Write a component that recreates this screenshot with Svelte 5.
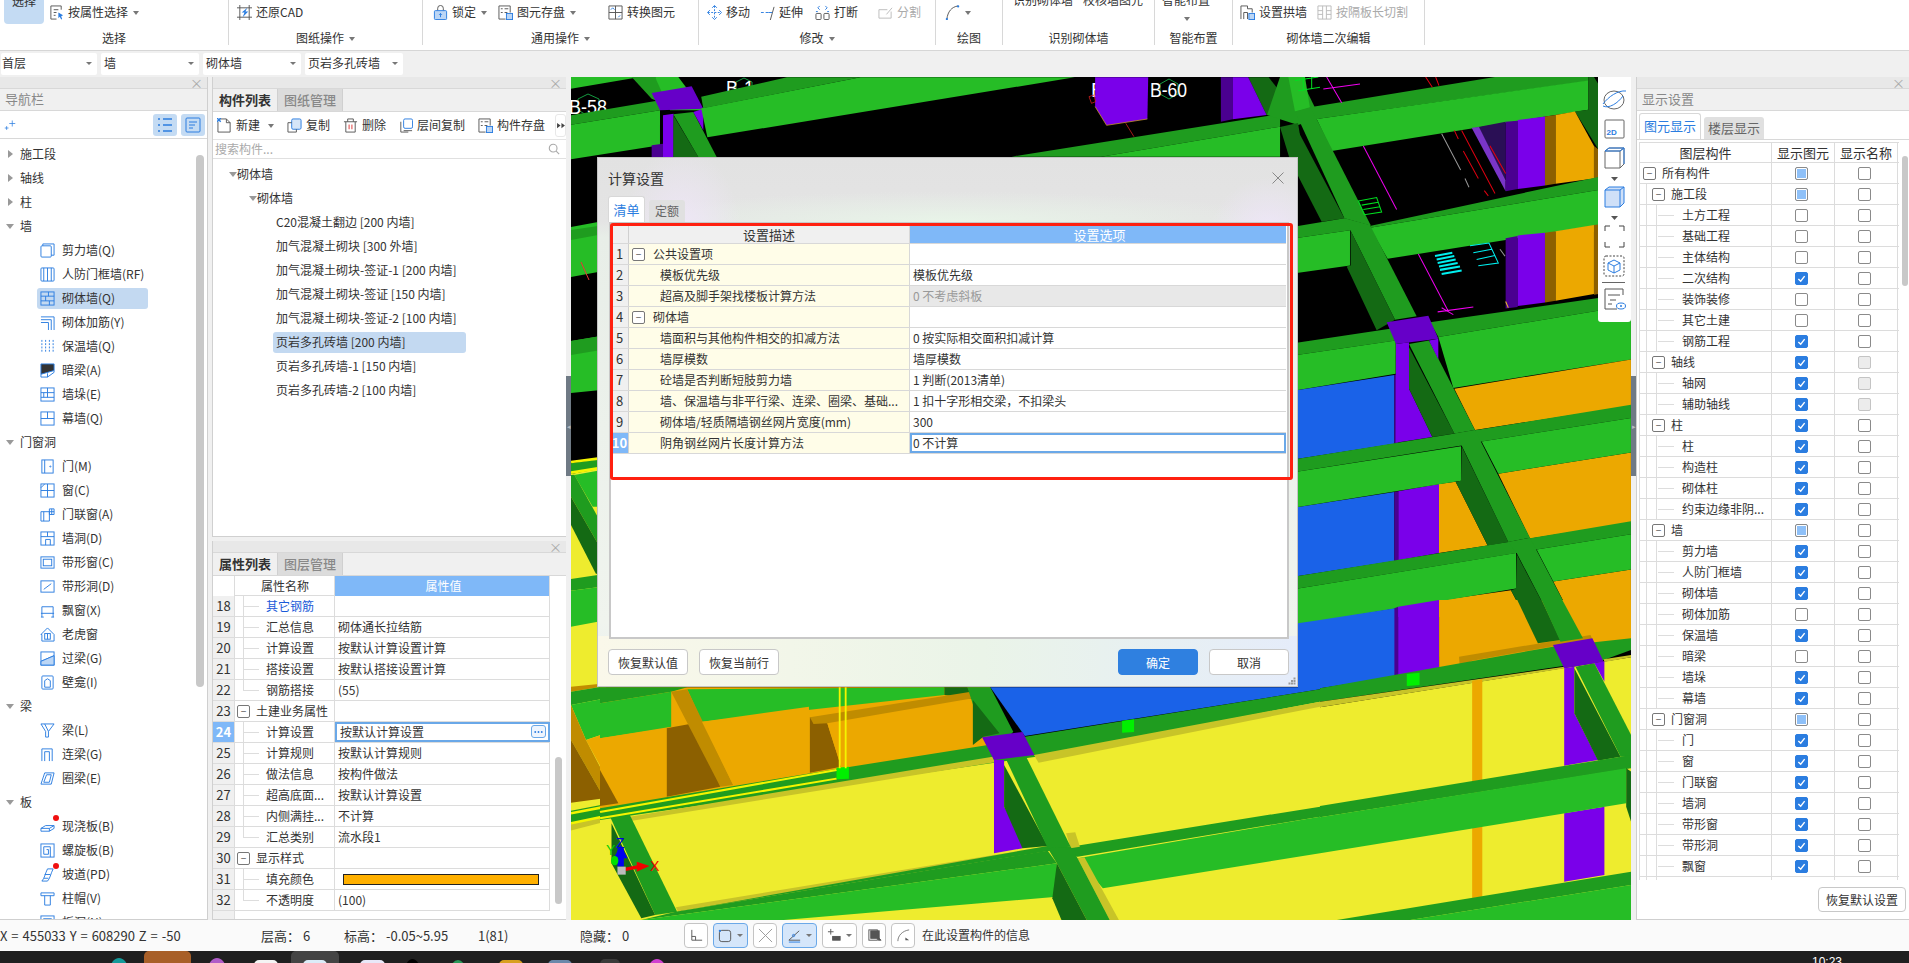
<script>
  const G='#26bd26',D='#1f9c1f',K='#146a14',P='#7a00ea',Q='#6600c8',V='#4a0090',B='#1a62e8',O='#eca800',N='#8c6000',R='#c08c00',Y='#eeec2e',L='#c8c428',S='#00f000';

  const leftStrip=[
    [Y,'15,222 120,200 120,1560 15,1560'],[D,'15,190 95,178 95,208 15,222'],[G,'25,225 95,212 95,320 80,320'],
    [D,'15,225 25,224 95,350 95,430 15,290'],[K,'15,290 95,430 95,520 90,522 15,375'],[D,'15,537 95,525 95,562 15,572'],
    [G,'15,572 95,562 95,665 15,680'],[R,'15,860 120,850 120,858 15,875'],[D,'15,875 120,858 120,895 15,915'],
    [G,'15,915 120,895 120,1000 60,1020'],[O,'60,1020 120,1000 120,1130'],[R,'15,915 60,1020 120,1135 120,1195 115,1195 15,1020'],
    [N,'15,1020 115,1195 15,1208'],[D,'15,1232 120,1212 120,1250 15,1272'],[L,'15,1272 120,1250 120,1265 15,1292']
  ];
  const topLeft=[
    [G,'33,0 240,0 33,35'],[D,'215,0 285,0 355,100 275,65'],[G,'285,0 355,0 430,100 330,100'],
    [D,'33,115 300,70 300,100 33,143'],[G,'33,143 300,100 300,205 33,247'],[V,'275,205 309,200 309,270 275,270'],
    [P,'309,115 341,110 341,270 309,270'],[K,'340,115 415,240 340,240'],[D,'340,112 400,105 470,240 415,240'],
    [P,'400,105 430,95 430,160'],[Q,'275,48 395,28 430,95 300,100']
  ];
  const topBand=[
    [G,'150,325 540,232 1065,232 165,412'],[D,'150,290 360,232 540,232 155,325'],
    [D,'910,470 1568,342 1568,380 1130,470'],[G,'1130,470 1568,380 1568,470'],
    [K,'1490,232 1540,232 1568,275 1568,340 1535,345'],[V,'1423,232 1452,232 1452,358 1423,365'],[P,'1452,232 1490,232 1535,345 1452,358'],
    [P,'1115,232 1245,232 1243,357 1143,376 1115,320']
  ];
  const right=[
    [G,'-20,0 30,0 45,90 0,100'],[D,'45,88 600,0 880,0 880,12 65,122 20,122'],[G,'65,122 880,10 880,95 110,215'],
    [K,'880,0 897,0 910,20 910,210 840,100 880,95'],[D,'0,100 45,88 65,122 228,432 148,410'],[K,'0,140 148,410 80,420 0,270'],
    ['#2a0f55','550,145 632,130 632,300'],['#7a35c8','530,147 552,145 632,300 632,332'],
    [V,'632,130 668,127 668,325 632,332'],[P,'668,125 750,115 750,315 668,325'],[N,'750,115 782,110 782,310 750,315'],[O,'782,110 840,100 897,200 897,295 782,310'],[N,'897,200 910,210 910,292 897,295'],
    [D,'228,432 910,290 910,328 225,438'],[G,'225,438 910,328 910,430 278,528'],[D,'0,434 148,410 225,432 165,445 0,468'],[G,'0,468 165,445 165,547 0,570'],
    [D,'148,410 225,430 365,695 300,705'],[K,'167,447 300,705 245,735 155,550 167,547'],
    [V,'632,468 668,462 668,668 632,672'],[P,'668,460 750,452 750,655 668,665'],[N,'750,452 782,448 782,650 750,655'],[O,'782,448 897,430 897,630 782,650'],[N,'897,430 910,428 910,630 897,632'],
    [D,'0,772 290,730 303,765 0,808'],[G,'0,808 302,765 302,862 0,910'],[D,'405,712 1008,628 1008,663 430,755'],[G,'430,755 1008,663 1008,820 475,903'],
    [B,'0,910 298,865 298,1065 0,1110'],[V,'298,865 310,860 310,1062 298,1065'],[P,'303,775 342,770 342,905 412,1045 302,1062'],
    [O,'478,905 1008,820 1008,955 540,1025'],[K,'342,785 478,1035 412,1045 342,905'],[D,'342,775 402,765 540,1025 478,1035'],[P,'402,765 430,760 430,820'],[Q,'275,712 400,693 430,760 303,775'],
    [B,'0,1250 298,1205 298,1405 0,1450'],[V,'298,1205 310,1203 310,1403 298,1405'],[P,'310,1203 432,1182 432,1382 310,1403'],[O,'432,1182 482,1175 578,1360 432,1382'],[O,'610,1152 1008,1090 1008,1295 705,1340'],
    [D,'0,1110 480,1035 1008,952 1008,990 560,1058 500,1070 0,1147'],[G,'0,1147 498,1072 498,1172 0,1250'],[G,'560,1058 1008,990 1008,1090 610,1152'],
    [K,'500,1072 640,1350 578,1360 482,1175 498,1172'],[D,'480,1035 540,1025 705,1338 640,1350 500,1070'],
    [B,'0,1592 298,1545 298,1568 0,1568'],[V,'298,1545 310,1543 310,1568 298,1568'],[P,'310,1540 432,1520 432,1568 310,1568'],[O,'432,1520 648,1490 690,1568 432,1568'],[O,'775,1465 1008,1430 1008,1568 830,1568'],
    [D,'0,1450 640,1350 1008,1290 1008,1328 725,1372 665,1382 0,1487'],[G,'0,1487 663,1382 663,1485 0,1592'],[G,'725,1372 1008,1328 1008,1430 775,1465'],
    [K,'665,1385 765,1568 690,1568 648,1490 663,1485'],[D,'640,1350 705,1338 830,1568 765,1568 665,1382']
  ];
  const bottom=[
    [O,'0,262 850,262 850,480 0,660'],[B,'850,262 1568,262 1568,268 925,408'],
    [G,'1520,0 1568,0 1568,60 1520,70'],[B,'1520,70 1568,60 1568,265 1520,275'],
    [Y,'0,650 1568,300 1568,960 0,960'],
    [D,'0,262 190,262 155,275 0,310'],[G,'0,310 155,275 155,380 0,415'],[G,'190,268 750,262 750,285 222,365'],[K,'750,262 800,262 815,297 750,285'],
    [N,'145,385 222,365 262,560 145,590'],[R,'155,275 190,268 290,555 262,560'],[O,'222,365 455,320 458,520 290,555'],
    [N,'457,352 495,370 525,500 457,518'],[O,'495,370 812,297 812,438 525,500'],[R,'457,352 808,275 812,295 495,370 465,372'],
    [O,'0,415 145,385 145,590 40,610 0,510'],[N,'0,510 40,610 0,618'],
    [D,'800,262 850,262 900,395 890,410 835,410'],[K,'812,300 870,400 835,410 812,435'],
    [D,'0,625 515,507 845,435 925,410 1568,268 1568,305 950,470 0,660'],[L,'65,650 855,470 860,487 70,662'],[L,'945,465 1568,305 1568,320 955,488'],
    [Y,'0,668 22,660 90,960 0,960'],
    [D,'22,650 65,645 168,935 120,945'],[K,'25,670 120,945 90,955 25,790'],
    [L,'165,922 975,738 980,752 170,935'],[D,'120,945 165,935 980,752 1040,770 1568,650 1568,620 1025,740 975,738 168,935'],[D,'90,960 165,935 975,752 995,790'],
    [G,'90,960 995,790 995,890 400,960'],[G,'1040,775 1568,650 1568,760 1095,865'],
    [L,'1015,700 1035,697 1045,740 1025,745'],[L,'1040,775 1055,772 1130,960 1110,960'],[D,'975,745 1025,740 1040,775 1110,960 1060,960 995,790'],[K,'995,790 985,895 1005,960 1060,960'],
    [P,'858,480 880,480 880,620 920,715 920,745 858,760'],[K,'880,495 975,738 920,745 880,620'],[D,'885,480 928,470 1025,740 975,745'],[Q,'832,412 920,396 946,465 858,480'],
    [S,'515,503 542,500 542,536 515,538'],[S,'1137,362 1163,358 1163,396 1137,398']
  ];
  const lower=[
    [B,'0,60 200,25 200,230 0,265'],[V,'198,25 208,20 208,230 198,232'],[P,'208,20 317,0 317,210 208,232'],[O,'317,0 828,0 828,120 317,210'],
    [Y,'0,322 828,172 828,960 0,960'],[R,'370,170 720,105 725,118 405,182 372,200'],
    [K,'525,0 590,0 640,120 580,130'],[D,'590,0 645,0 700,115 640,125'],
    [D,'0,265 620,140 828,115 828,150 755,180 0,305'],[L,'0,305 650,200 652,205 0,322'],[L,'755,178 828,165 828,172 757,186'],
    [O,'405,242 432,238 432,890 405,895'],[P,'650,205 677,200 677,340 740,480 650,497'],[P,'730,190 757,184 757,245'],[K,'677,205 800,470 740,482 677,340'],[D,'680,200 730,190 828,405 828,470 800,470'],
    [P,'650,640 757,620 757,825 650,845'],[D,'0,618 800,470 828,465 828,505 0,652'],[G,'0,652 815,505 815,610 0,760'],[K,'815,505 828,515 828,665 815,620'],
    [Q,'620,135 725,115 755,185 650,205'],[S,'231,222 265,218 265,255 231,258'],
    [D,'45,960 828,815 828,855 240,960'],[G,'240,960 828,855 828,960']
  ];

  const i={
    shear:'<rect x="1" y="3" width="11" height="12" rx="1"/><path d="M3 3V1h12v12h-3"/>',
    rf:'<rect x="1" y="1" width="14" height="14" rx="1"/><path d="M4 1v14M8 1v14M12 1v14"/>',
    brick:'<rect x="1" y="1" width="14" height="14"/><path d="M1 5.500h14M1 10.500h14M9 1v4.500M6 5.500v5M10 10.500v4.500"/>',
    rebar:'<path d="M1 2h14v14M1 5h11v11M1 8h8v8"/>',
    insul:'<path d="M2 1v14M14 1v14M6 1v14M10 1v14" stroke-dasharray="2 1.500"/>',
    dark:'<path d="M1 1h14v7L1 12z" fill="currentColor"/><path d="M1 12v3h7l7-5V8M8 11v4"/>',
    pier:'<rect x="1" y="1" width="14" height="14"/><path d="M1 6h14M1 11h14M8 1v5M8 6v5M4 6v5"/>',
    curtain:'<rect x="1" y="1" width="14" height="14"/><path d="M1 8h14M8 1v7"/>',
    door:'<rect x="2" y="1" width="12" height="14"/><path d="M5 1v14"/><circle cx="11" cy="8" r=".6"/>',
    win:'<rect x="1" y="1" width="14" height="14"/><path d="M1 8h14M8 1v14M1 5l4-4"/>',
    dw:'<path d="M1 5h9v10H1zM4 5v10M10 2h5v6h-5zM12.500 2v6M10 5h5"/>',
    hole:'<rect x="1" y="1" width="14" height="14"/><path d="M1 6h14M6 15V9h5v6M8 1v5"/>',
    strip:'<rect x="1" y="2" width="14" height="12"/><rect x="3.500" y="4.500" width="9" height="7"/>',
    striph:'<rect x="1" y="2" width="14" height="12"/><path d="M4 11l8-6"/>',
    bay:'<path d="M2 15V4h12v11M1 11h14M1 15h3M12 15h3"/>',
    dormer:'<path d="M1 8l7-7 7 7v7H2V8z"/><rect x="5" y="7" width="6" height="6"/><path d="M8 7v6"/>',
    lintel:'<rect x="1" y="1" width="14" height="14"/><path d="M1 11l14-6" /><path d="M1 11l14-6V15H1z" fill="#bcd6f5"/>',
    niche:'<rect x="2" y="1" width="12" height="14" rx="1"/><path d="M5 13V6l3-2 3 2v7z"/>',
    beam:'<path d="M1 1h14L9 9v6H6V9zM5 1l4 8"/>',
    coupling:'<path d="M2 15V2h11v13M5 15V5h5v10"/>',
    ring:'<path d="M5 2h10l-3 12H1zM7 4h5l-2 8H4z"/>',
    slab:'<path d="M1 10l5-3h9v3l-5 3H1zM1 10h9v3M10 10l5-3"/>',
    spiral:'<rect x="1" y="1" width="14" height="14"/><path d="M11 15V4H4v8h5V7H7"/>',
    ramp:'<path d="M2 15c3-3 3-7 6-13h6c-3 6-3 10-6 13zM5 8h6M4 12h5"/>',
    cap:'<path d="M1 2h14v3H1zM5 5v10h6V5"/>',
    slabh:'<rect x="1" y="1" width="14" height="14"/><rect x="4" y="4" width="8" height="8"/>',
    propsel:'<path d="M2 1h11v4M2 1v14h6M5 5h5M5 8h3M5 11h2" stroke="#555"/><path d="M10 8l5 3-2 1 1 3-1 .5-1.500-3-1.500 1.500z" fill="#2b7de0" stroke="none"/>',
    restore:'<path d="M3 0v16M0 3h16M13 0v16M0 13h16" stroke="#555"/><path d="M11 3L5 8h3l-2 5 6-6H9z" fill="#2b7de0" stroke="none"/>',
    lock:'<path d="M5 6V3.500a3 3 0 016 0V6" stroke="#555"/><rect x="1.500" y="6" width="13" height="9.500" rx="1" fill="#bcd6f5" stroke="#2b7de0"/><path d="M8 13V9M6.500 10.500L8 9l1.500 1.500" stroke="#2b7de0"/>',
    save:'<path d="M13 8V1H1v14h7M3 4h2M7 4h4M3 8h2M7 8h3" stroke="#555"/><rect x="9" y="9" width="6.500" height="6.500" fill="#bcd6f5" stroke="#2b7de0"/>',
    conv:'<path d="M1 1h14v14H1zM8 1v14M1 8h14" stroke="#555"/><path d="M3 5l2-2 2 2M11 13l2-2" stroke="#2b7de0"/>',
    move:'<path d="M8 1v14M1 8h14" stroke="#2b7de0" stroke-dasharray="2 1.500"/><path d="M5.500 3L8 .5 10.500 3M5.500 13L8 15.500 10.500 13M3 5.500L.5 8 3 10.500M13 5.500L15.500 8 13 10.500" stroke="#2b7de0"/>',
    extend:'<path d="M1 8h3M6 8h3" stroke="#2b7de0"/><path d="M15 2l-4 14" stroke="#555"/><path d="M9 8h4" stroke="#2b7de0"/>',
    brk:'<rect x="1" y="9" width="5.500" height="6.500" rx="1" stroke="#555"/><rect x="9.500" y="9" width="5.500" height="6.500" rx="1" stroke="#555"/><path d="M3 3l2-2M3 3l2 2M13 3l-2-2M13 3l-2 2M1 7h2M13 7h2" stroke="#2b7de0"/>',
    split:'<path d="M14 7v7H1V5h9M9 10l6-7" stroke="#bbb"/>',
    arc:'<path d="M2 15C3 7 7 2 14 1" stroke="#555"/><circle cx="14" cy="1.500" r="1.200" fill="#2b7de0" stroke="none"/><circle cx="2" cy="15" r="1.200" fill="#2b7de0" stroke="none"/>',
    arch:'<path d="M1 15V1h7v3h5v4M4 15V8h4v7" stroke="#555"/><rect x="9.500" y="9" width="6" height="6.500" fill="#bcd6f5" stroke="#2b7de0"/>',
    cut:'<path d="M1 1h14v14H1zM6 1v14M10 1v14M1 6h5M10 6h5M1 10h5M10 10h5" stroke="#bbb"/>',
    newf:'<path d="M3 1h7l4 4v10H1V4" stroke="#555"/><path d="M10 1v4h4" stroke="#555"/><path d="M0 0l4 4M4 0L0 4" stroke="#2b7de0" stroke-width="1.500"/>',
    copy:'<rect x="5" y="1" width="10" height="11" rx="1.500" fill="#d5e5f8" stroke="#2b7de0"/><path d="M5 5H1v10h9v-3" stroke="#555"/>',
    del:'<path d="M1 4h14M5 4V1h6v3M3 4v11h10V4" stroke="#555"/><path d="M6.500 7v5M9.500 7v5" stroke="#d33"/>',
    fcopy:'<rect x="6" y="1" width="9.500" height="10" rx="1.500" stroke="#2b7de0"/><path d="M6 13.500h9M3 4v11M3 15h8" stroke="#555"/>',
    list:'<path d="M1 2h2M1 8h2M1 14h2M6 2h9M6 8h9M6 14h9" stroke-width="1.500"/>',
    detail:'<rect x="1" y="1" width="14" height="14" rx="1"/><path d="M4 5h8M4 8h6M4 11h4"/>',
    add:'<path d="M1 12h5M3.500 9.500v5M11 2v8M7 6h8" />'
  };

  const groups=[
    {c:'g1',label:'选择',items:[{tile:1,t:'选择'},{ic:'propsel',t:'按属性选择',car:1,ml:5}]},
    {c:'g2',label:'图纸操作',lc:1,pl:8,items:[{ic:'restore',t:'还原CAD'}]},
    {c:'g3',label:'通用操作',lc:1,pl:10,items:[{ic:'lock',t:'锁定',car:1},{ic:'save',t:'图元存盘',car:1,ml:11},{ic:'conv',t:'转换图元',ml:32}]},
    {c:'g4',label:'修改',lc:1,pl:8,items:[{ic:'move',t:'移动'},{ic:'extend',t:'延伸',ml:10},{ic:'brk',t:'打断',ml:12},{ic:'split',t:'分割',ml:20,off:1}]},
    {c:'g5',label:'绘图',pl:9,items:[{ic:'arc',t:'',car:1}]},
    {c:'g6',label:'识别砌体墙',pl:10,items:[{clip:1,t:'识别砌体墙'},{clip:1,t:'校核墙图元',ml:10}]},
    {c:'g7',label:'智能布置',pl:7,items:[{clip:1,t:'智能布置',under:1}]},
    {c:'g8',label:'砌体墙二次编辑',pl:7,items:[{ic:'arch',t:'设置拱墙'},{ic:'cut',t:'按隔板长切割',ml:10,off:1}]}
  ];

  const nav=[
    ['c','施工段'],['c','轴线'],['c','柱'],['o','墙'],
    ['i','剪力墙(Q)','shear'],['i','人防门框墙(RF)','rf'],['i','砌体墙(Q)','brick',1],['i','砌体加筋(Y)','rebar'],['i','保温墙(Q)','insul'],['i','暗梁(A)','dark'],['i','墙垛(E)','pier'],['i','幕墙(Q)','curtain'],
    ['o','门窗洞'],['i','门(M)','door'],['i','窗(C)','win'],['i','门联窗(A)','dw'],['i','墙洞(D)','hole'],['i','带形窗(C)','strip'],['i','带形洞(D)','striph'],['i','飘窗(X)','bay'],['i','老虎窗','dormer'],['i','过梁(G)','lintel'],['i','壁龛(I)','niche'],
    ['o','梁'],['i','梁(L)','beam'],['i','连梁(G)','coupling'],['i','圈梁(E)','ring'],
    ['o','板'],['i','现浇板(B)','slab',0,1],['i','螺旋板(B)','spiral'],['i','坡道(PD)','ramp',0,1],['i','柱帽(V)','cap'],['i','板洞(N)','slabh']
  ];
  const tools=[['newf','新建',1,0],['copy','复制',0,13],['del','删除',0,13],['fcopy','层间复制',0,12],['save','构件存盘',0,13]];
  const tree=[['砌体墙',0],['砌体墙',1],['C20混凝土翻边 [200 内墙]',2],['加气混凝土砌块 [300 外墙]',2],['加气混凝土砌块-签证-1 [200 内墙]',2],['加气混凝土砌块-签证 [150 内墙]',2],['加气混凝土砌块-签证-2 [100 内墙]',2],['页岩多孔砖墙 [200 内墙]',2,1],['页岩多孔砖墙-1 [150 内墙]',2],['页岩多孔砖墙-2 [100 内墙]',2]];
  const attrs=[
    [18,'其它钢筋','','leaf link'],[19,'汇总信息','砌体通长拉结筋','leaf'],[20,'计算设置','按默认计算设置计算','leaf'],[21,'搭接设置','按默认搭接设置计算','leaf'],[22,'钢筋搭接','(55)','end'],
    [23,'土建业务属性','','grp'],[24,'计算设置','按默认计算设置','leaf sel'],[25,'计算规则','按默认计算规则','leaf'],[26,'做法信息','按构件做法','leaf'],[27,'超高底面...','按默认计算设置','leaf'],[28,'内侧满挂...','不计算','leaf'],[29,'汇总类别','流水段1','end'],
    [30,'显示样式','','grp'],[31,'填充颜色','#bar','leaf'],[32,'不透明度','(100)','end']
  ];
  const settings=[
    [1,'公共设置项','','grp'],[2,'模板优先级','模板优先级','leaf'],[3,'超高及脚手架找楼板计算方法','0 不考虑斜板','end off'],[4,'砌体墙','','grp'],
    [5,'墙面积与其他构件相交的扣减方法','0 按实际相交面积扣减计算','leaf'],[6,'墙厚模数','墙厚模数','leaf'],[7,'砼墙是否判断短肢剪力墙','1 判断(2013清单)','leaf'],
    [8,'墙、保温墙与非平行梁、连梁、圈梁、基础...','1 扣十字形相交梁，不扣梁头','leaf'],[9,'砌体墙/轻质隔墙钢丝网片宽度(mm)','300','leaf'],[10,'阴角钢丝网片长度计算方法','0 不计算','end sel']
  ];
  const layers=[
    [0,'所有构件','p',''],[1,'施工段','p',''],[2,'土方工程','',''],[2,'基础工程','',''],[2,'主体结构','',''],[2,'二次结构','c',''],[2,'装饰装修','',''],[2,'其它土建','',''],[2,'钢筋工程','c',''],
    [1,'轴线','c','g'],[2,'轴网','c','g'],[2,'辅助轴线','c','g'],
    [1,'柱','c',''],[2,'柱','c',''],[2,'构造柱','c',''],[2,'砌体柱','c',''],[2,'约束边缘非阴...','c',''],
    [1,'墙','p',''],[2,'剪力墙','c',''],[2,'人防门框墙','c',''],[2,'砌体墙','c',''],[2,'砌体加筋','',''],[2,'保温墙','c',''],[2,'暗梁','',''],[2,'墙垛','c',''],[2,'幕墙','c',''],
    [1,'门窗洞','p',''],[2,'门','c',''],[2,'窗','c',''],[2,'门联窗','c',''],[2,'墙洞','c',''],[2,'带形窗','c',''],[2,'带形洞','c',''],[2,'飘窗','c',''],[2,'老虎窗','c','']
  ];
  const combos=['首层','墙','砌体墙','页岩多孔砖墙'];
  // x, width, colour, how far it rises into the strip, round
  const bars=[[110,18,'#159a9a',5,1],[144,47,'#a85f28',12],[208,18,'#b05cc8',5,1],[254,24,'#f4f4f4',3],[291,48,'#444',12],[303,24,'#dcecf8',3],[360,25,'#e8e8f8',3],[405,15,'#000',4,1],[450,16,'#2a9a5a',3,1],[499,24,'#d8a020',3],[548,24,'#6a88aa',3],[600,20,'#3a3a3a',4],[648,18,'#d040d0',4,1]];
  let cursor=0;
  const tasks=[...bars].sort((a,b)=>(a[0]-b[0])).map((b)=>{const ml=b[0]-cursor;cursor=b[0]+b[1];return {ml,w:b[1],c:b[2],mt:12-b[3],r:b[4]};});
</script>

<div class="app">
  <header class="ribbon">
    {#each groups as g}
      <section class="group {g.c}">
        <div class="top" class:pad8={g.pl===8} class:pad10={g.pl===10} class:pad9={g.pl===9} class:pad7={g.pl===7}>
          {#each g.items as it}
            {#if it.tile}
              <div class="tile">{it.t}</div>
            {:else if it.clip}
              <div class="clipitem" style:margin-left="{it.ml||0}px"><span>{it.t}</span>{#if it.under}<i class="caret under"></i>{/if}</div>
            {:else}
              <div class="rbtn" class:off={it.off} style:margin-left="{it.ml||0}px">
                <svg class="ic" viewBox="0 0 16 16" fill="none">{@html i[it.ic]}</svg>
                {#if it.t}<span>{it.t}</span>{/if}
                {#if it.car}<i class="caret"></i>{/if}
              </div>
            {/if}
          {/each}
        </div>
        <div class="glabel">{g.label}{#if g.lc}<i class="caret lc"></i>{/if}</div>
      </section>
    {/each}
  </header>

  <div class="combos">
    {#each combos as c}
      <div class="combo"><span>{c}</span><i class="caret small"></i></div>
    {/each}
  </div>

  <main class="main">
    <aside class="panel nav">
      <div class="ptitle"><span class="x">×</span></div>
      <div class="phead">导航栏</div>
      <div class="navtool">
        <svg class="sparkle" viewBox="0 0 16 16" fill="none" stroke="#2b7de0">{@html i.add}</svg>
        <div class="navbtn"><svg viewBox="0 0 16 16" fill="none" stroke="#2b7de0">{@html i.list}</svg></div>
        <div class="navbtn"><svg viewBox="0 0 16 16" fill="none" stroke="#2b7de0">{@html i.detail}</svg></div>
      </div>
      <div class="navlist">
        <div class="navscroll"></div>
        {#each nav as n}
          {#if n[0]==='i'}
            <div class="navitem">
              <div class="navinner" class:on={n[3]}>
                <svg class="nic" viewBox="0 0 16 16" fill="none" stroke="#2b7de0">{@html i[n[2]]}</svg>
                {#if n[4]}<b class="dot"></b>{/if}
                <span>{n[1]}</span>
              </div>
            </div>
          {:else}
            <div class="navcat"><i class={n[0]==='c'?'tri-r':'tri-d'}></i><span>{n[1]}</span></div>
          {/if}
        {/each}
      </div>
    </aside>

    <div class="midcol">
      <section class="panel complist">
        <div class="ptitle"><span class="x">×</span></div>
        <div class="tabs">
          <div class="tab on">构件列表</div><div class="tab">图纸管理</div>
        </div>
        <div class="ctool">
          {#each tools as t}
            <div class="rbtn" style:margin-left="{t[3]}px">
              <svg class="ic" viewBox="0 0 16 16" fill="none">{@html i[t[0]]}</svg><span>{t[1]}</span>{#if t[2]}<i class="caret"></i>{/if}
            </div>
          {/each}
          <div class="more"><svg viewBox="0 0 9 8" fill="#444"><path d="M0 1l4 3-4 3zM5 1l4 3-4 3z"/></svg></div>
        </div>
        <div class="search"><span>搜索构件...</span>
          <svg viewBox="0 0 14 14" fill="none" stroke="#aaa" stroke-width="1.300"><circle cx="6" cy="6" r="4.500"/><path d="M9.500 9.500L13 13"/></svg>
        </div>
        <div class="tree">
          {#each tree as t}
            <div class="trow lv{t[1]}" ><div class="tin" class:on={t[2]}>{#if t[1]<2}<i class="tri-d"></i>{/if}<span>{t[0]}</span></div></div>
          {/each}
        </div>
      </section>

      <section class="panel attr">
        <div class="ptitle"><span class="x">×</span></div>
        <div class="tabs small">
          <div class="tab on">属性列表</div><div class="tab">图层管理</div>
        </div>
        <div class="atable">
          <div class="aright">
            <div class="arow ahead"><div class="agut"></div><div class="aname">属性名称</div><div class="aval">属性值</div></div>
            {#each attrs as a}
              <div class="arow">
                <div class="agut" class:cur={a[3].includes('sel')}>{a[0]}</div>
                <div class="aname {a[3]}">{#if a[3]==='grp'}<i class="box">−</i>{/if}{a[1]}</div>
                <div class="aval" class:sel={a[3].includes('sel')}>
                  {#if a[2]==='#bar'}<div class="colorbar"></div>{:else}{a[2]}{/if}
                  {#if a[3].includes('sel')}<div class="dots"><svg viewBox="0 0 14 13" fill="#2b7de0"><circle cx="3.500" cy="6.500" r="1"/><circle cx="7" cy="6.500" r="1"/><circle cx="10.500" cy="6.500" r="1"/></svg></div>{/if}
                </div>
              </div>
            {/each}
            <div class="arow stub"><div class="agut"></div></div>
          </div>
          <div class="ascroll"><div></div></div>
        </div>
      </section>
    </div>

    <div class="split"><div class="grip">◂</div></div>

    <section class="canvas">
      <svg class="scene" viewBox="571 77 1060 843" width="1060" height="843">
        <rect x="571" y="77" width="1060" height="843" fill="#000"/>

        <g fill="none" stroke="#149a40">
          <polygon points="1169,79 1178,84 1178,94 1169,99 1160,94 1160,84"/>
          <polygon points="588,94 599,99 599,110 588,116 578,110 578,99"/>
          <polygon points="744,78 752,82 752,90 744,94 736,90 736,82"/>
        </g>
        <g class="cad">
          <text x="1150" y="97" textLength="37" lengthAdjust="spacingAndGlyphs">B-60</text>
          <text x="1091" y="97">B</text>
          <text x="569" y="114" textLength="38" lengthAdjust="spacingAndGlyphs">B-58</text>
          <text x="726" y="95" textLength="28" lengthAdjust="spacingAndGlyphs">B-1</text>
        </g>

        <g transform="translate(571 0)" fill="none">
          <polygon fill={G} points="0,227 27,222 27,272 0,277"/>
          <polygon fill={D} points="0,230 27,226 27,235 0,240"/>
          <polygon fill={G} points="0,341 30,336 30,390 0,393"/>
          <polygon fill={D} points="0,341 30,336 30,350 0,355"/>
          <path d="M10 262l8 18" stroke="#e33"/>
        </g>
        <g transform="translate(566 400) scale(.3333)">
          {#each leftStrip as p}<polygon fill={p[0]} points={p[1]}/>{/each}
          <path d="M15 186L95 176M15 218L95 205M15 1240L120 1220M15 1270L120 1248" stroke="#f4f400" stroke-width="8"/>
        </g>
        <g transform="translate(560 77) scale(.3333)">
          {#each topLeft as p}<polygon fill={p[0]} points={p[1]}/>{/each}
        </g>
        <g transform="translate(640 0) scale(.4082 .3333)">
          {#each topBand as p}<polygon fill={p[0]} points={p[1]}/>{/each}
          <path d="M1143 376L1115 320M1143 376L1243 357" stroke="#d0a020" stroke-width="2"/>
          <path d="M1190 370L1210 410M1100 290l12-5 4 20-10 5z" stroke="#e02020" stroke-width="2" fill="none"/>
        </g>
        <polygon fill={D} points="1267,115 1280,77 1300,77 1320,118 1298,125"/>
        <polygon fill={K} points="1280,127 1298,123 1304,160 1290,160"/>

        <g transform="translate(1295 77) scale(.3333 .3444)">
          {#each right as p}<polygon fill={p[0]} points={p[1]}/>{/each}
          <path d="M205 200L305 385" stroke="#f000f0" stroke-width="3"/>
          <path d="M370 514L460 680M428 682L535 668M85 35L195 20M95 0L140 75M440 670l35 20" stroke="#f000f0" stroke-width="3" fill="none"/>
          <path d="M440 165L497 270M510 295L522 320" stroke="#999" stroke-width="3"/>
          <path d="M500 155L600 338M505 215L550 295M478 155L490 180M585 200L632 280M392 0L412 30M422 0L432 25M568 330L580 345" stroke="#e00010" stroke-width="3"/>
          <path d="M190 360L245 350L260 392L208 400zM200 372L250 364M205 385L255 377" stroke="#00e020" stroke-width="3" fill="none"/>
          <path d="M0 10L70 0M10 40L75 30M25 0V40M50 0V35" stroke="#00e020" stroke-width="3" fill="none"/>
          <path d="M420 520L472 510M425 530L478 520M428 540L482 530M432 550L488 540M435 560L495 550M440 572L500 562" stroke="#00f0f0" stroke-width="6"/>
          <path d="M525 490L582 482L610 540L550 548M535 510L590 500M545 530L600 518" stroke="#00f0f0" stroke-width="3" fill="none"/>
          <path d="M615 500L630 520" stroke="#999" stroke-width="3"/>
          <path d="M632 652L640 670" stroke="#e8c020" stroke-width="3"/>
        </g>

        <g transform="translate(600 600) scale(.4592 .3333)">
          {#each bottom as p}<polygon fill={p[0]} points={p[1]}/>{/each}
          <path d="M522 262V505M535 262V505" stroke="#f4f400" stroke-width="4"/>
          <path d="M0 636L515 510M0 655L515 536" stroke="#f4f400" stroke-width="6"/>
          <path d="M45 800V745" stroke="#0000f0" stroke-width="14"/>
          <path d="M45 735L30 775H60z" fill="#0000f0"/>
          <path d="M55 808L85 800" stroke="#f00000" stroke-width="10"/>
          <path d="M108 798L80 785V815z" fill="#f00000"/>
          <ellipse cx="32" cy="782" rx="8" ry="14" fill="#00e000"/>
          <rect x="38" y="800" width="18" height="24" fill="#bbb"/>
        </g>
        <g class="axis">
          <text x="616" y="848" fill="#0000e0">Z</text>
          <text x="606" y="855" fill="#00d000">Y</text>
          <text x="650" y="871" fill="#f00000">X</text>
        </g>
        <g transform="translate(1320 600) scale(.3757 .3333)">
          {#each lower as p}<polygon fill={p[0]} points={p[1]}/>{/each}
        </g>
      </svg>

      <div class="sidebar">
        <svg viewBox="0 0 33 245" fill="none" stroke="#666">
          <ellipse cx="16" cy="23" rx="10" ry="9" />
          <path d="M5 27C10 20 20 13 28 14M5 29c6 3 15-3 20-10" stroke="#2b7de0"/>
          <rect x="7" y="43" width="19" height="18" rx="1"/><text x="8.500" y="58" class="twod">2D</text>
          <path d="M7 74V91h15l4-4V71h-15zM7 74h15v17M22 74l4-3" /><path d="M7 74l4-3h15l-4 3H7zM26 71v16" stroke="#2b7de0"/>
          <path d="M13 100h7l-3.500 4z" fill="#555" stroke="none"/>
          <path d="M7 113l4-3h15v16l-4 4H7z" fill="#cfe0f8" stroke="#2b7de0"/><path d="M7 113h15v17M22 113l4-3" stroke="#2b7de0"/>
          <path d="M13 139h7l-3.500 4z" fill="#555" stroke="none"/>
          <path d="M7 154v-5h5M21 149h5v5M26 165v5h-5M12 170h-5v-5" stroke="#444"/>
          <rect x="6" y="179" width="20" height="20" rx="2" stroke-dasharray="2 1.500" stroke="#444"/>
          <path d="M16 183l6 3v7l-6 3-6-3v-7zM10 186l6 3 6-3M16 189v7" stroke="#2b7de0"/>
          <path d="M4 205.500h23"/>
          <path d="M25 218v-6H7v20h12M10 218h12M12 223h6M10 227h4" stroke="#555"/>
          <ellipse cx="23" cy="229" rx="4.500" ry="3" stroke="#2b7de0"/><circle cx="23" cy="229" r="1" fill="#2b7de0" stroke="none"/>
        </svg>
      </div>

      <div class="dialog">
        <div class="dhead"><span>计算设置</span>
          <svg class="dclose" viewBox="0 0 12 12" fill="none" stroke="#888"><path d="M.5 .5l11 11M11.500 .5l-11 11"/></svg>
        </div>
        <div class="dtabs"><div class="dtab on">清单</div><div class="dtab">定额</div></div>
        <div class="dbody">
          <div class="stable">
            <div class="srow shead"><div class="sgut"></div><div class="sdesc">设置描述</div><div class="sval">设置选项</div></div>
            {#each settings as s}
              <div class="srow">
                <div class="sgut" class:cur={s[3].includes('sel')}>{s[0]}</div>
                <div class="sdesc {s[3]}">{#if s[3]==='grp'}<i class="box">−</i>{/if}{s[1]}</div>
                <div class="sval" class:off={s[3].includes('off')} class:sel={s[3].includes('sel')}>{s[2]}</div>
              </div>
            {/each}
          </div>
          <div class="redbox"></div>
        </div>
        <div class="dfoot">
          <button class="btn">恢复默认值</button><button class="btn">恢复当前行</button>
          <div class="spacer"></div>
          <button class="btn primary">确定</button><button class="btn">取消</button>
        </div>
        <div class="resize">
          <svg viewBox="0 0 8 8" fill="#999"><rect x="5.500" y=".5" width="2" height="2"/><rect x="3" y="3" width="2" height="2"/><rect x="5.500" y="3" width="2" height="2"/><rect x=".5" y="5.500" width="2" height="2"/><rect x="3" y="5.500" width="2" height="2"/><rect x="5.500" y="5.500" width="2" height="2"/></svg>
        </div>
      </div>
    </section>

    <div class="split"><div class="grip">▸</div></div>

    <aside class="panel rpanel">
      <div class="ptitle"><span class="x">×</span></div>
      <div class="phead">显示设置</div>
      <div class="rtabs"><div class="rtab on">图元显示</div><div class="rtab">楼层显示</div></div>
      <div class="ltable">
        <div class="lclip">
          <div class="lrow lhead"><div>图层构件</div><div>显示图元</div><div>显示名称</div></div>
          {#each layers as l}
            <div class="lrow">
              <div class="lname l{l[0]}">{#if l[0]<2}<i class="box">−</i>{/if}<span>{l[1]}</span></div>
              <div class="lcheck"><i class="cb {l[2]}">{#if l[2]==='c'}<svg viewBox="0 0 14 14" fill="none" stroke="#fff" stroke-width="1.800"><path d="M3 7.500l3 3 5-6.500"/></svg>{/if}</i></div>
              <div class="lcheck"><i class="cb {l[3]}"></i></div>
            </div>
          {/each}
        </div>
        <div class="lscroll"></div>
      </div>
      <div class="rfoot"><button class="btn wide">恢复默认设置</button></div>
    </aside>
  </main>

  <footer class="status">
    <span class="s1">X = 455033 Y = 608290 Z = -50</span><span class="s2">层高： 6</span><span class="s3">标高： -0.05~5.95</span><span class="s4">1(81)</span><span class="s5">隐藏： 0</span>
    <div class="sbtn b1"><svg viewBox="0 0 16 16" fill="none" stroke="#555"><path d="M3 2v11h11M3 9h4v4"/></svg></div>
    <div class="sbtn b2 on"><svg viewBox="0 0 16 16" fill="none" stroke="#555"><rect x="1.500" y="2.500" width="12" height="12" rx="2.500"/><circle cx="2" cy="3" r="1.200" fill="#2b7de0" stroke="none"/></svg><i class="caret small"></i></div>
    <div class="sbtn b1"><svg viewBox="0 0 16 16" fill="none" stroke="#999"><path d="M1 1l14 14M15 1L1 15"/></svg></div>
    <div class="sbtn b2 on"><svg viewBox="0 0 16 16" fill="none" stroke="#555"><path d="M2 13L13 3M2 13h12" /><path d="M2 15h12" stroke="#2b7de0"/><circle cx="7" cy="8" r="1.200" stroke="#2b7de0"/></svg><i class="caret small"></i></div>
    <div class="sbtn b2"><svg viewBox="0 0 16 16" fill="none" stroke="#555"><path d="M1 4h6M4 1v6"/><rect x="6" y="9" width="8" height="4" fill="#555"/></svg><i class="caret small"></i></div>
    <div class="sbtn b1"><svg viewBox="0 0 16 16" fill="none" stroke="#555"><rect x="2" y="2" width="9" height="11"/><rect x="4" y="3" width="9" height="8" fill="#555"/><path d="M12 10l3 3h-3z" fill="#555"/></svg></div>
    <div class="sbtn b1"><svg viewBox="0 0 16 16" fill="none" stroke="#777"><path d="M2 14c0-6 5-11 12-12"/><path d="M10 10l4 3h-4z" fill="#555" stroke="none"/></svg></div>
    <span class="hint">在此设置构件的信息</span>
  </footer>

  <div class="taskbar">
    {#each tasks as b}
      <i class="tk" class:round={b.r} style:margin-left="{b.ml}px" style:width="{b.w}px" style:background={b.c} style:margin-top="{b.mt}px"></i>
    {/each}
    <span class="clock">10:23</span>
  </div>
</div>

<style>
  :global(body){margin:0;background:#fafafa;overflow:hidden;}
  .app{width:1909px;height:963px;display:flex;flex-direction:column;overflow:hidden;font:12px/1.2 "Noto Sans CJK SC","Noto Sans",sans-serif;color:#333;}
  svg{display:block;}

  .ribbon{height:50px;flex:none;background:#fff;border-bottom:1px solid #d6d6d6;display:flex;overflow:hidden;}
  .group{height:45px;flex:none;border-right:1px solid #d8d8d8;display:flex;flex-direction:column;box-sizing:border-box;}
  .g1{width:229px}.g2{width:194px}.g3{width:276px}.g4{width:237px}.g5{width:67px}.g6{width:152px}.g7{width:78px}.g8{width:192px}
  .top{height:25px;display:flex;align-items:center;flex:none;}
  .pad7{padding-left:7px}.pad8{padding-left:8px}.pad9{padding-left:9px}.pad10{padding-left:10px}
  .tile{width:40px;height:24px;margin-left:4px;background:#c4dbf3;border-radius:0 0 4px 4px;text-align:center;line-height:2px;margin-top:-1px;}
  .rbtn{display:flex;align-items:center;gap:4px;white-space:nowrap;}
  .rbtn.off{color:#aaa;}
  .ic{width:15px;height:15px;flex:none;}
  .caret{display:inline-block;width:0;height:0;border:3.500px solid transparent;border-top:4px solid #777;border-bottom:0;margin-left:1px;flex:none;}
  .caret.small{border-width:3px;border-top-width:3.500px;border-bottom:0;}
  .lc{margin-left:5px;vertical-align:2px;}
  .clipitem{position:relative;height:25px;white-space:nowrap;margin-top:-25px;line-height:24px;}
  .caret.under{position:absolute;left:21px;top:29px;}
  .glabel{text-align:center;line-height:25px;height:20px;}

  .combos{height:26px;flex:none;background:#f0f0f0;display:flex;gap:4px;padding-left:1px;align-items:center;}
  .combo{width:96px;height:22px;margin-top:-1px;background:#fff;border-radius:2px;display:flex;align-items:center;justify-content:space-between;padding:0 5px 0 1px;box-sizing:border-box;}
  .combo:nth-child(n+2){width:98px;padding-left:3px;}

  .main{height:843px;flex:none;display:flex;background:#f0f0f0;}
  .panel{background:#fff;box-sizing:border-box;display:flex;flex-direction:column;}
  .ptitle{height:11px;background:#e8e8e8;border-bottom:1px solid #d8d8d8;display:flex;justify-content:flex-end;align-items:center;flex:none;}
  .x{color:#aaa;font-size:13px;line-height:11px;padding-right:4px;}
  .phead{height:21px;background:#f0f0f0;border-bottom:1px solid #d8d8d8;line-height:20px;color:#888;padding-left:5px;flex:none;font-size:13px;}

  .nav{width:208px;border-right:1px solid #cfcfcf;border-bottom:1px solid #cfcfcf;}
  .navtool{height:27px;display:flex;align-items:center;border-bottom:1px solid #d8d8d8;padding:0 2px 0 4px;gap:4px;flex:none;}
  .sparkle{width:12px;height:12px;margin-right:auto;}
  .navbtn{width:24px;height:22px;background:#c4dbf3;border-radius:3px;display:flex;align-items:center;justify-content:center;}
  .navbtn svg{width:16px;height:16px;}
  .navlist{flex:1;overflow:hidden;position:relative;padding-top:3px;}
  .navscroll{position:absolute;left:196px;top:16px;width:8px;height:532px;background:#c8c8c8;border-radius:4px;}
  .navcat,.navitem{height:24px;display:flex;align-items:center;}
  .navcat{padding-left:6px;gap:6px;}
  .tri-r{width:0;height:0;border:4px solid transparent;border-left:5px solid #999;border-right:0;flex:none;margin-left:2px;margin-right:1px;}
  .tri-d{width:0;height:0;border:4px solid transparent;border-top:5px solid #999;border-bottom:0;flex:none;}
  .navitem{padding-left:37px;}
  .navinner{width:111px;height:21px;border-radius:3px;display:flex;align-items:center;padding-left:3px;box-sizing:border-box;gap:7px;position:relative;}
  .navinner.on{background:#c3d9f1;}
  .nic{width:15px;height:15px;flex:none;}
  .dot{position:absolute;left:16px;top:-1px;width:6px;height:6px;border-radius:50%;background:#f01010;}

  .midcol{width:354px;margin-left:4px;flex:none;display:flex;flex-direction:column;gap:4px;}
  .complist{height:460px;border:1px solid #d0d0d0;border-width:0 0 1px 1px;flex:none;}
  .attr{height:379px;border-left:1px solid #d0d0d0;border-bottom:1px solid #d0d0d0;flex:none;}
  .tabs{display:flex;height:22px;background:#f0f0f0;border-bottom:1px solid #d8d8d8;flex:none;}
  .tab{width:64px;text-align:center;line-height:22px;background:#dcdcdc;color:#888;font-size:13px;font-weight:500;border-right:1px solid #d0d0d0;}
  .tab.on{background:#f0f0f0;color:#333;font-weight:700;}
  .ctool{height:27px;display:flex;align-items:center;border-bottom:1px solid #e4e4e4;padding-left:4px;flex:none;position:relative;}
  .ctool .caret{margin-left:4px;}
  .more{position:absolute;right:0;top:2px;width:11px;height:23px;background:#fff;border:1px solid #e8e8e8;border-radius:3px;box-sizing:border-box;display:flex;align-items:center;justify-content:center;}
  .more svg{width:8px;height:7px;}
  .search{height:18px;display:flex;align-items:center;justify-content:space-between;padding:0 6px 0 2px;color:#aaa;border-bottom:1px solid #e0e0e0;flex:none;}
  .search svg{width:12px;height:12px;}
  .tree{padding-top:3px;}
  .trow{height:24px;display:flex;align-items:center;}
  .lv0{padding-left:13px}.lv1{padding-left:33px}.lv2{padding-left:60px}
  .tin{display:flex;align-items:center;gap:0;height:21px;padding-left:3px;border-radius:3px;}
  .tin.on{width:193px;background:#c3d9f1;box-sizing:border-box;}

  .atable{flex:1;display:flex;overflow:hidden;}
  .aright{width:337px;flex:none;}
  .arow{display:grid;grid-template-columns:22px 100px 215px;height:21px;box-sizing:border-box;border-bottom:1px solid #dcdcdc;line-height:20px;}
  .agut{background:#f0f0f0;text-align:center;border-right:1px solid #dcdcdc;font-size:13px;}
  .agut.cur{background:#7fb8f8;color:#fff;font-weight:700;}
  .aname{padding-left:31px;border-right:1px solid #dcdcdc;white-space:nowrap;}
  .ahead{height:20px;background:#fff;}
  .ahead .agut{background:#fff;}
  .ahead .aname{padding-left:26px;}
  .ahead .aval{background:#7fb8f8;color:#fff;text-align:center;}
  .aval{padding-left:3px;border-right:1px solid #dcdcdc;position:relative;}
  .aval.sel{outline:2px solid #6aa8e8;outline-offset:-2px;padding-left:5px;}
  .leaf{background:linear-gradient(#ddd,#ddd) 8px 10px/16px 1px no-repeat,linear-gradient(#ddd,#ddd) 8px 0/1px 100% no-repeat;}
  .end{background:linear-gradient(#ddd,#ddd) 8px 10px/16px 1px no-repeat,linear-gradient(#ddd,#ddd) 8px 0/1px 10px no-repeat;}
  .link{color:#1a5ad8;}
  .grp{padding-left:2px;display:flex;align-items:center;}
  .box{display:inline-block;width:11px;height:11px;border:1px solid #777;border-radius:2px;font-style:normal;text-align:center;line-height:10px;font-size:10px;margin-right:6px;flex:none;color:#555;background:#fff;}
  .colorbar{width:194px;height:9px;margin:5px 0 0 5px;border:1px solid #222;background:#ffb000;}
  .dots{position:absolute;right:3px;top:3px;width:15px;height:13px;border:1px solid #6aa8e8;border-radius:3px;background:#eef5fe;box-sizing:border-box;}
  .stub{border:0;}
  .stub .agut{height:10px;}
  .ascroll{flex:1;position:relative;}
  .ascroll div{position:absolute;left:5px;top:181px;width:7px;height:147px;background:#c8c8c8;border-radius:4px;}

  .split{width:5px;flex:none;display:flex;align-items:center;}
  .grip{width:5px;height:100px;margin-top:-145px;background:#6f7a85;color:#b8bcc0;font-size:7px;line-height:100px;overflow:hidden;text-align:center;}

  .canvas{width:1060px;height:843px;position:relative;flex:none;overflow:hidden;}
  .scene{position:absolute;left:0;top:0;}
  .cad text{fill:#fff;font:20px "Liberation Sans",sans-serif;}
  .axis text{font:14px "Liberation Sans",sans-serif;}
  .sidebar{position:absolute;left:1027px;top:0;width:33px;height:245px;background:#fff;border-radius:0 0 3px 3px;}
  .sidebar svg{width:33px;height:245px;}
  .twod{font:bold 8px "Liberation Sans",sans-serif;fill:#2b7de0;stroke:none;}

  .dialog{position:absolute;left:26px;top:80px;width:701px;height:530px;box-sizing:border-box;border:1px solid #c4c4c4;padding:0 8px;display:flex;flex-direction:column;
    background:linear-gradient(90deg,#faf8ea 0,#eaf4e8 55%,#e5ecfa 100%) bottom/100% 50px no-repeat,radial-gradient(ellipse 60px 90px at 12% 15%,#efe6f8 0,transparent 100%),radial-gradient(ellipse 60px 60px at 96% 15%,#efe6fa 0,transparent 100%),radial-gradient(ellipse 340px 30px at 50% 12%,#e8f4e8 0,transparent 100%),linear-gradient(#e2e2e2 0,#e4e4e4 12%,#e8eee8 15%,#f0f4ee 88%,#e8f0f0 100%),#f2f4f0;}
  .dhead{height:38px;display:flex;align-items:center;justify-content:space-between;font-size:14px;padding:2px 5px 0 2px;flex:none;box-sizing:border-box;}
  .dclose{width:12px;height:12px;}
  .dtabs{display:flex;gap:4px;height:26px;align-items:flex-end;flex:none;padding-left:2px;}
  .dtab{width:36px;height:22px;line-height:22px;background:#e0e0e0;text-align:center;color:#666;border-radius:3px 3px 0 0;}
  .dtab.on{width:37px;height:26px;line-height:26px;background:#fff;color:#2b7de0;font-size:13px;border:1px solid #d8d8d8;border-bottom:0;box-sizing:border-box;}
  .dbody{height:417px;background:#fff;border:2px solid #c8c8c8;box-sizing:border-box;position:relative;flex:none;width:680px;margin-left:3px;padding-top:2px;}
  .stable{width:675px;}
  .srow{display:grid;grid-template-columns:18px 281px 376px;height:21px;box-sizing:border-box;border-bottom:1px solid #d8d8d8;line-height:20px;}
  .shead{height:18px;line-height:17px;background:#f0f0f0;}
  .shead .sdesc{background:#f0f0f0;text-align:center;padding-left:0;font-size:13px;}
  .shead .sval{background:#7fb8f8;color:#fff;text-align:center;font-size:13px;}
  .sgut{background:#f0f0f0;text-align:center;border-right:1px solid #d0d0d0;font-size:13px;}
  .sgut.cur{background:#7fb8f8;color:#fff;font-weight:700;padding:0;}
  .sdesc{background:#fffde8;padding-left:31px;border-right:1px solid #d8d8d8;white-space:nowrap;}
  .sdesc.leaf,.sdesc.end{background-color:#fffde8;}
  .sdesc.grp{padding-left:3px;}
  .sdesc.grp .box{margin-right:8px;}
  .sval{padding-left:3px;}
  .sval.off{background:#e8e8e8;color:#999;}
  .sval.sel{outline:2px solid #6aa8e8;outline-offset:-2px;}
  .redbox{position:absolute;left:-1px;top:-1px;width:683px;height:257px;box-sizing:border-box;border:3px solid #ff2010;border-radius:3px;pointer-events:none;}
  .dfoot{display:flex;gap:11px;padding-top:10px;padding-left:2px;width:683px;box-sizing:border-box;}
  .spacer{flex:1;}
  .btn{width:80px;height:26px;background:#fff;border:1px solid #c8c8c8;border-radius:4px;font:12px "Noto Sans CJK SC",sans-serif;color:#333;padding:0;}
  .primary{background:#2f80e0;border-color:#2f80e0;color:#fff;}
  .wide{width:88px;height:25px;}
  .resize{position:absolute;right:1px;bottom:1px;width:8px;height:8px;}

  .rpanel{width:273px;border-left:1px solid #cfcfcf;flex:none;border-bottom:1px solid #cfcfcf;}
  .rtabs{height:29px;display:flex;align-items:flex-end;padding-left:2px;gap:3px;border-bottom:1px solid #d8d8d8;box-sizing:border-box;flex:none;}
  .rtab{width:60px;height:22px;line-height:22px;text-align:center;background:#e0e0e0;color:#666;border-radius:3px 3px 0 0;font-size:13px;}
  .rtab.on{width:62px;height:26px;line-height:24px;background:#fff;color:#2b7de0;border:1px solid #d8d8d8;border-bottom:0;box-sizing:border-box;}
  .ltable{height:740px;display:flex;padding:2px 0 0 2px;box-sizing:border-box;flex:none;overflow:hidden;}
  .lclip{width:260px;height:738px;overflow:hidden;flex:none;}
  .lrow{display:grid;grid-template-columns:133px 63px 63px;height:21px;box-sizing:border-box;border-bottom:1px solid #dcdcdc;}
  .lrow>div{border-right:1px solid #dcdcdc;}
  .lhead>div{text-align:center;line-height:20px;font-size:13px;}
  .lhead{border-top:1px solid #dcdcdc;}
  .lrow>div:first-child{border-left:1px solid #dcdcdc;}
  .lname{display:flex;align-items:center;white-space:nowrap;}
  .l0{padding-left:3px}
  .l1{padding-left:12px;background:linear-gradient(#ddd,#ddd) 6px 0/1px 100% no-repeat;}
  .l2{padding-left:42px;background:linear-gradient(#ddd,#ddd) 6px 0/1px 100% no-repeat,linear-gradient(#ddd,#ddd) 16px 0/1px 100% no-repeat,linear-gradient(#ddd,#ddd) 18px 10px/16px 1px no-repeat;}
  .l0 .box,.l1 .box{margin-right:6px;}
  .lcheck{display:flex;align-items:center;justify-content:center;}
  .cb{width:13px;height:13px;border:1px solid #8a8a8a;border-radius:2px;box-sizing:border-box;display:block;background:#fff;margin-right:3px;}
  .cb.c{background:#2b7de0;border-color:#2b7de0;}
  .cb.c svg{width:11px;height:11px;}
  .cb.p{background:#8ec0f8;box-shadow:inset 0 0 0 1px #fff;}
  .cb.g{background:#ececec;border-color:#c4c4c4;}
  .lscroll{width:6px;height:130px;margin:14px 0 0 3px;background:#c8c8c8;border-radius:3px;flex:none;}
  .rfoot{display:flex;justify-content:flex-end;padding:7px 3px 0 0;}

  .status{height:31px;flex:none;background:#fafafa;display:flex;align-items:center;white-space:nowrap;}
  .s1{width:261px;font-size:13px;word-spacing:1px;}.s2{width:83px}.s3{width:134px}.s4{width:102px}.s5{width:104px}
  .s2,.s3,.s4,.s5{font-size:13px;}
  .sbtn{height:25px;background:#fff;border:1px solid #c4c4c4;border-radius:4px;display:flex;align-items:center;justify-content:center;gap:3px;box-sizing:border-box;flex:none;}
  .sbtn svg{width:15px;height:15px;}
  .b1{width:24px;margin-right:5px;}
  .b2{width:35px;margin-right:5px;}
  .sbtn.on{background:#d5e6fa;border-color:#6aa8e8;}
  .hint{margin-left:2px;}

  .taskbar{height:12px;flex:none;background:#1f1f1f;display:flex;overflow:hidden;position:relative;}
  .tk{display:block;height:24px;border-radius:5px 5px 0 0;flex:none;}
  .tk.round{border-radius:50%;}
  .clock{position:absolute;left:1812px;top:4px;color:#fff;font:12px "Liberation Sans",sans-serif;}
</style>
